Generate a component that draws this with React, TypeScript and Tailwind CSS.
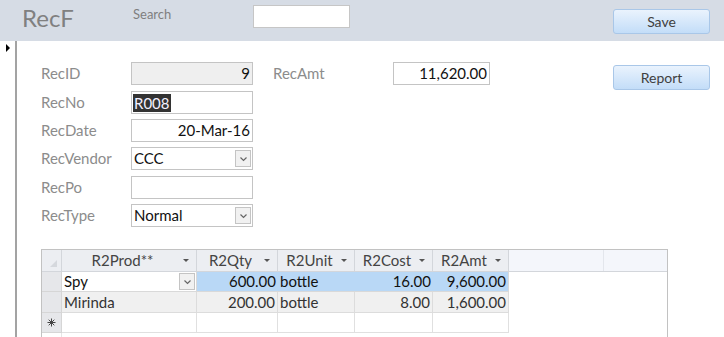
import React from "react";

const FONT = { fontFamily: "Lato, 'Open Sans', sans-serif" };

const Chevron = () => (
  <svg width="9" height="6" viewBox="0 0 9 6">
    <polyline points="1.5,1.5 4.5,4.5 7.5,1.5" fill="none" stroke="#666" strokeWidth="1.2" />
  </svg>
);

const DropBtn = () => (
  <div className="w-[16px] h-[17px] bg-[#f1f1f1] border border-[#c4c4c4] flex items-center justify-center shrink-0">
    <Chevron />
  </div>
);

const SortArrow = () => (
  <svg width="6" height="3" viewBox="0 0 6 3" className="shrink-0">
    <polygon points="0,0 6,0 3,3" fill="#555" />
  </svg>
);

const NewRowStar = () => (
  <svg width="9" height="9" viewBox="0 0 9 9">
    <g stroke="#444" strokeWidth="1">
      <line x1="4.5" y1="0.5" x2="4.5" y2="8.5" />
      <line x1="0.5" y1="4.5" x2="8.5" y2="4.5" />
      <line x1="1.7" y1="1.7" x2="7.3" y2="7.3" />
      <line x1="7.3" y1="1.7" x2="1.7" y2="7.3" />
    </g>
  </svg>
);

function Label({ text }: { text: string }) {
  return <div className="w-[90px] h-[23px] flex items-center text-[15px] text-[#8c8c8c]">{text}</div>;
}

function Row({ children }: { children: React.ReactNode }) {
  return <div className="flex items-start h-[28px]">{children}</div>;
}

const inputBase = "h-[23px] border border-[#c4c4c4] flex items-center text-[15px] text-[#111]";

function HeadCell({ w, text }: { w: string; text: string }) {
  return (
    <div className={`${w} h-full border-r border-[#d3d6db] bg-[#eceef2] flex items-center text-[15px] text-[#444]`}>
      <div className="flex-1 text-center">{text}</div>
      <div className="mr-[7px]">
        <SortArrow />
      </div>
    </div>
  );
}

export default function App() {
  return (
    <div className="w-[724px] h-[337px] overflow-hidden bg-white" style={FONT}>
      {/* Header */}
      <div className="h-[41px] bg-[#d6dce5] flex items-start">
        <div className="ml-[22px] w-[111px] mt-[3px] text-[24px] text-[#808080] leading-[30px]">RecF</div>
        <div className="w-[120px] mt-[5px] text-[13px] text-[#7f7f7f] leading-[18px]">Search</div>
        <div className="w-[97px] h-[23px] mt-[5px] bg-white border border-[#c6c6c6]" />
        <button className="ml-[263px] w-[97px] h-[25px] mt-[9px] rounded-[3px] border border-[#a9c7e8] bg-linear-to-b from-[#eaf3fd] to-[#c3ddf8] text-[14px] text-[#404040] flex items-center justify-center">
          Save
        </button>
      </div>

      {/* Body */}
      <div className="flex h-[296px]">
        <div className="w-[17px] border-r-2 border-[#a3a3a3] shrink-0">
          <svg width="4" height="8" viewBox="0 0 4 8" className="ml-[6px] mt-[3px]">
            <polygon points="0,0 4,4 0,8" fill="#000" />
          </svg>
        </div>

        <div className="flex-1 pl-[24px] pt-[21px]">
          <Row>
            <Label text="RecID" />
            <div className={`${inputBase} w-[122px] bg-[#efefef] justify-end pr-[2px]`}>9</div>
            <div className="ml-[20px] w-[120px] h-[23px] flex items-center text-[15px] text-[#8c8c8c]">RecAmt</div>
            <div className={`${inputBase} w-[97px] bg-white justify-end pr-[2px] text-[14px]`}>11,620.00</div>
            <button className="ml-[123px] mt-[3px] w-[97px] h-[25px] rounded-[3px] border border-[#a9c7e8] bg-linear-to-b from-[#eaf3fd] to-[#c3ddf8] text-[14px] text-[#404040] flex items-center justify-center">
              Report
            </button>
          </Row>
          <div className="h-[1px]" />
          <Row>
            <Label text="RecNo" />
            <div className={`${inputBase} w-[122px] bg-white pl-[1px]`}>
              <span className="bg-[#333] text-[#f4f0ff] px-[1px] leading-[18px]">R008</span>
            </div>
          </Row>
          <Row>
            <Label text="RecDate" />
            <div className={`${inputBase} w-[122px] bg-white justify-end pr-[2px]`}>20-Mar-16</div>
          </Row>
          <Row>
            <Label text="RecVendor" />
            <div className={`${inputBase} w-[122px] bg-white justify-between pl-[2px] pr-[1px]`}>
              <span>CCC</span>
              <DropBtn />
            </div>
          </Row>
          <div className="h-[1px]" />
          <Row>
            <Label text="RecPo" />
            <div className={`${inputBase} w-[122px] bg-white`} />
          </Row>
          <Row>
            <Label text="RecType" />
            <div className={`${inputBase} w-[122px] bg-white justify-between pl-[2px] pr-[1px]`}>
              <span>Normal</span>
              <DropBtn />
            </div>
          </Row>

          {/* Datasheet */}
          <div className="mt-[17px] w-[627px] border-t border-l border-r border-[#c2c2c2] text-[15px]">
            <div className="flex h-[22px] border-b border-[#d3d6db]">
              <div className="w-[20px] h-full bg-[#eceef2] border-r border-[#d3d6db] relative">
                <svg width="7" height="7" viewBox="0 0 7 7" className="absolute left-[8px] top-[10px]">
                  <polygon points="7,0 7,7 0,7" fill="#d5d8dd" />
                </svg>
              </div>
              <HeadCell w="w-[135px]" text="R2Prod**" />
              <HeadCell w="w-[81px]" text="R2Qty" />
              <HeadCell w="w-[77px]" text="R2Unit" />
              <HeadCell w="w-[78px]" text="R2Cost" />
              <HeadCell w="w-[76px]" text="R2Amt" />
              <div className="w-[95px] h-full bg-[#f4f6fb] border-r border-[#e3e6ec]" />
              <div className="flex-1 h-full bg-[#f4f6fb]" />
            </div>

            {/* Row 1 (current) */}
            <div className="flex h-[20px] text-[#111]">
              <div className="w-[20px] bg-[#e6e7ea] border-r border-b border-[#d6d6d6]" />
              <div className="w-[135px] bg-white border-r border-b border-[#d9d9d9] flex items-center justify-between pl-[2px] pr-[1px]">
                <span>Spy</span>
                <DropBtn />
              </div>
              <div className="w-[81px] bg-[#b9d8f6] border-b border-[#d9d9d9] flex items-center justify-end pr-[2px]">600.00</div>
              <div className="w-[77px] bg-[#b9d8f6] border-b border-[#d9d9d9] flex items-center pl-[2px]">bottle</div>
              <div className="w-[78px] bg-[#b9d8f6] border-b border-[#d9d9d9] flex items-center justify-end pr-[2px]">16.00</div>
              <div className="w-[76px] bg-[#b9d8f6] border-r border-b border-[#d9d9d9] flex items-center justify-end pr-[2px]">9,600.00</div>
              <div className="flex-1" />
            </div>

            {/* Row 2 */}
            <div className="flex h-[21px] text-[#333]">
              <div className="w-[20px] bg-[#e6e7ea] border-r border-b border-[#d6d6d6]" />
              <div className="w-[135px] bg-[#f0f0f0] border-r border-b border-[#dcdcdc] flex items-center pl-[2px]">Mirinda</div>
              <div className="w-[81px] bg-[#f0f0f0] border-r border-b border-[#dcdcdc] flex items-center justify-end pr-[2px]">200.00</div>
              <div className="w-[77px] bg-[#f0f0f0] border-r border-b border-[#dcdcdc] flex items-center pl-[2px]">bottle</div>
              <div className="w-[78px] bg-[#f0f0f0] border-r border-b border-[#dcdcdc] flex items-center justify-end pr-[2px]">8.00</div>
              <div className="w-[76px] bg-[#f0f0f0] border-r border-b border-[#dcdcdc] flex items-center justify-end pr-[2px]">1,600.00</div>
              <div className="flex-1" />
            </div>

            {/* New row */}
            <div className="flex h-[20px]">
              <div className="w-[20px] bg-[#e6e7ea] border-r border-b border-[#d6d6d6] flex items-center justify-center">
                <NewRowStar />
              </div>
              <div className="w-[135px] border-r border-b border-[#e0e0e0]" />
              <div className="w-[81px] border-r border-b border-[#e0e0e0]" />
              <div className="w-[77px] border-r border-b border-[#e0e0e0]" />
              <div className="w-[78px] border-r border-b border-[#e0e0e0]" />
              <div className="w-[76px] border-r border-b border-[#e0e0e0]" />
              <div className="flex-1" />
            </div>

            <div className="flex h-[20px]">
              <div className="w-[20px] border-r border-[#e6e6e6]" />
              <div className="flex-1" />
            </div>
          </div>
        </div>
      </div>
    </div>
  );
}
